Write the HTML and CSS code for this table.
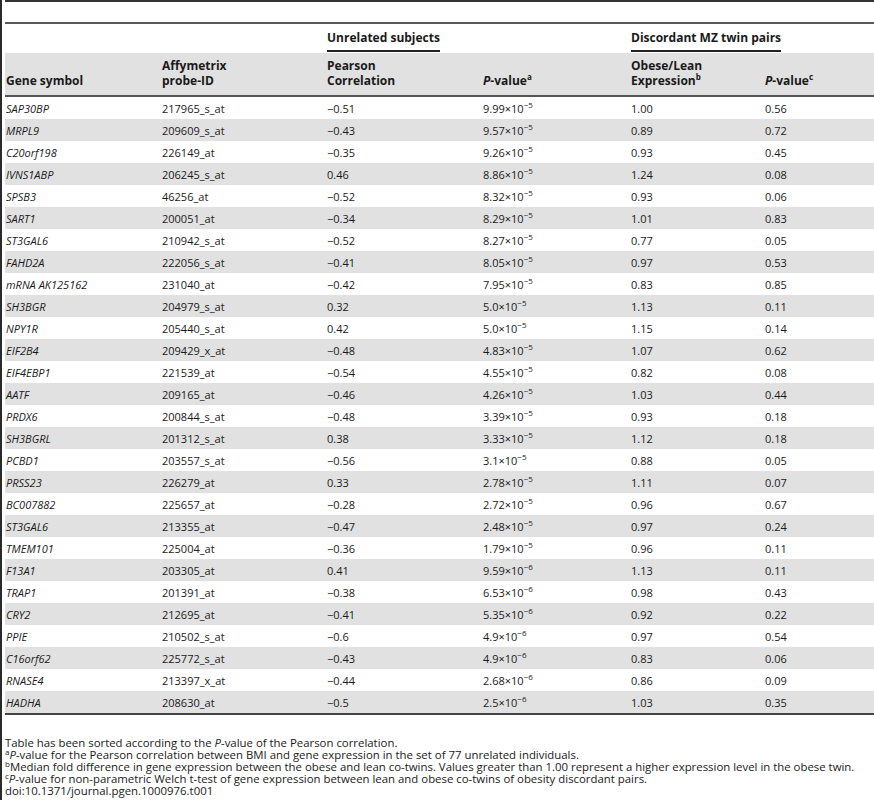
FILE: index.html
```html
<!DOCTYPE html>
<html>
<head>
<meta charset="utf-8">
<link rel="stylesheet" href="styles.css">
</head>
<body>
<div class="frame">
  <div class="topbar"></div>
  <table class="data">
    <colgroup>
      <col class="c1"><col class="c2"><col class="c3"><col class="c4"><col class="c5"><col class="c6">
    </colgroup>
    <thead>
      <tr class="group">
        <th></th><th></th>
        <th colspan="2"><span class="ul">Unrelated subjects</span></th>
        <th colspan="2"><span class="ul">Discordant MZ twin pairs</span></th>
      </tr>
      <tr class="head">
        <th>Gene symbol</th>
        <th>Affymetrix<br>probe-ID</th>
        <th>Pearson<br>Correlation</th>
        <th><i>P</i>-value<sup>a</sup></th>
        <th>Obese/Lean<br>Expression<sup>b</sup></th>
        <th><i>P</i>-value<sup>c</sup></th>
      </tr>
    </thead>
    <tbody>
      <tr><td><i>SAP30BP</i></td><td>217965_s_at</td><td>−0.51</td><td>9.99×10<sup>−5</sup></td><td>1.00</td><td>0.56</td></tr>
      <tr><td><i>MRPL9</i></td><td>209609_s_at</td><td>−0.43</td><td>9.57×10<sup>−5</sup></td><td>0.89</td><td>0.72</td></tr>
      <tr><td><i>C20orf198</i></td><td>226149_at</td><td>−0.35</td><td>9.26×10<sup>−5</sup></td><td>0.93</td><td>0.45</td></tr>
      <tr><td><i>IVNS1ABP</i></td><td>206245_s_at</td><td>0.46</td><td>8.86×10<sup>−5</sup></td><td>1.24</td><td>0.08</td></tr>
      <tr><td><i>SPSB3</i></td><td>46256_at</td><td>−0.52</td><td>8.32×10<sup>−5</sup></td><td>0.93</td><td>0.06</td></tr>
      <tr><td><i>SART1</i></td><td>200051_at</td><td>−0.34</td><td>8.29×10<sup>−5</sup></td><td>1.01</td><td>0.83</td></tr>
      <tr><td><i>ST3GAL6</i></td><td>210942_s_at</td><td>−0.52</td><td>8.27×10<sup>−5</sup></td><td>0.77</td><td>0.05</td></tr>
      <tr><td><i>FAHD2A</i></td><td>222056_s_at</td><td>−0.41</td><td>8.05×10<sup>−5</sup></td><td>0.97</td><td>0.53</td></tr>
      <tr><td><i>mRNA AK125162</i></td><td>231040_at</td><td>−0.42</td><td>7.95×10<sup>−5</sup></td><td>0.83</td><td>0.85</td></tr>
      <tr><td><i>SH3BGR</i></td><td>204979_s_at</td><td>0.32</td><td>5.0×10<sup>−5</sup></td><td>1.13</td><td>0.11</td></tr>
      <tr><td><i>NPY1R</i></td><td>205440_s_at</td><td>0.42</td><td>5.0×10<sup>−5</sup></td><td>1.15</td><td>0.14</td></tr>
      <tr><td><i>EIF2B4</i></td><td>209429_x_at</td><td>−0.48</td><td>4.83×10<sup>−5</sup></td><td>1.07</td><td>0.62</td></tr>
      <tr><td><i>EIF4EBP1</i></td><td>221539_at</td><td>−0.54</td><td>4.55×10<sup>−5</sup></td><td>0.82</td><td>0.08</td></tr>
      <tr><td><i>AATF</i></td><td>209165_at</td><td>−0.46</td><td>4.26×10<sup>−5</sup></td><td>1.03</td><td>0.44</td></tr>
      <tr><td><i>PRDX6</i></td><td>200844_s_at</td><td>−0.48</td><td>3.39×10<sup>−5</sup></td><td>0.93</td><td>0.18</td></tr>
      <tr><td><i>SH3BGRL</i></td><td>201312_s_at</td><td>0.38</td><td>3.33×10<sup>−5</sup></td><td>1.12</td><td>0.18</td></tr>
      <tr><td><i>PCBD1</i></td><td>203557_s_at</td><td>−0.56</td><td>3.1×10<sup>−5</sup></td><td>0.88</td><td>0.05</td></tr>
      <tr><td><i>PRSS23</i></td><td>226279_at</td><td>0.33</td><td>2.78×10<sup>−5</sup></td><td>1.11</td><td>0.07</td></tr>
      <tr><td><i>BC007882</i></td><td>225657_at</td><td>−0.28</td><td>2.72×10<sup>−5</sup></td><td>0.96</td><td>0.67</td></tr>
      <tr><td><i>ST3GAL6</i></td><td>213355_at</td><td>−0.47</td><td>2.48×10<sup>−5</sup></td><td>0.97</td><td>0.24</td></tr>
      <tr><td><i>TMEM101</i></td><td>225004_at</td><td>−0.36</td><td>1.79×10<sup>−5</sup></td><td>0.96</td><td>0.11</td></tr>
      <tr><td><i>F13A1</i></td><td>203305_at</td><td>0.41</td><td>9.59×10<sup>−6</sup></td><td>1.13</td><td>0.11</td></tr>
      <tr><td><i>TRAP1</i></td><td>201391_at</td><td>−0.38</td><td>6.53×10<sup>−6</sup></td><td>0.98</td><td>0.43</td></tr>
      <tr><td><i>CRY2</i></td><td>212695_at</td><td>−0.41</td><td>5.35×10<sup>−6</sup></td><td>0.92</td><td>0.22</td></tr>
      <tr><td><i>PPIE</i></td><td>210502_s_at</td><td>−0.6</td><td>4.9×10<sup>−6</sup></td><td>0.97</td><td>0.54</td></tr>
      <tr><td><i>C16orf62</i></td><td>225772_s_at</td><td>−0.43</td><td>4.9×10<sup>−6</sup></td><td>0.83</td><td>0.06</td></tr>
      <tr><td><i>RNASE4</i></td><td>213397_x_at</td><td>−0.44</td><td>2.68×10<sup>−6</sup></td><td>0.86</td><td>0.09</td></tr>
      <tr><td><i>HADHA</i></td><td>208630_at</td><td>−0.5</td><td>2.5×10<sup>−6</sup></td><td>1.03</td><td>0.35</td></tr>
    </tbody>
  </table>
  <div class="notes">
    <p>Table has been sorted according to the <i>P</i>-value of the Pearson correlation.</p>
    <p><sup>a</sup><i>P</i>-value for the Pearson correlation between BMI and gene expression in the set of 77 unrelated individuals.</p>
    <p><sup>b</sup>Median fold difference in gene expression between the obese and lean co-twins. Values greater than 1.00 represent a higher expression level in the obese twin.</p>
    <p><sup>c</sup><i>P</i>-value for non-parametric Welch t-test of gene expression between lean and obese co-twins of obesity discordant pairs.</p>
    <p>doi:10.1371/journal.pgen.1000976.t001</p>
  </div>
</div>
</body>
</html>
```

FILE: styles.css
```css
html, body {
  margin: 0;
  padding: 0;
  background: #fff;
}
body {
  font-family: "Open Sans", "Liberation Sans", sans-serif;
  color: #1a1a1a;
  overflow: hidden;
}
.frame {
  border-left: 2px solid #2a2a2a;
  padding-left: 3px;
  min-height: 800px;
  box-sizing: border-box;
}
.topbar {
  height: 20px;
  border-top: 2px solid #333;
  border-bottom: 2px solid #5a5a5a;
}
.data {
  width: 869px;
  border-collapse: collapse;
  table-layout: fixed;
  font-size: 11px;
}
.c1 { width: 156px; }
.c2 { width: 165px; }
.c3 { width: 156px; }
.c4 { width: 148px; }
.c5 { width: 134px; }
.c6 { width: 110px; }
.data th, .data td {
  text-align: left;
  padding: 0 0 0 1px;
  white-space: nowrap;
}
.group th {
  height: 29px;
  font-size: 12px;
  font-weight: bold;
  line-height: 15px;
  vertical-align: bottom;
  padding-bottom: 0;
}
.ul {
  display: inline-block;
  vertical-align: bottom;
  border-bottom: 2px solid #222;
  line-height: 15px;
  padding-bottom: 5px;
  margin-bottom: 1px;
}
.head th {
  background: #e1e1e1;
  font-size: 12px;
  font-weight: bold;
  line-height: 15px;
  vertical-align: bottom;
  padding-top: 5px;
  padding-bottom: 7px;
  border-bottom: 2px solid #555;
}
.head sup, .data td sup {
  font-size: 8px;
  line-height: 0;
  vertical-align: 5px;
}
.data td {
  height: 22px;
  vertical-align: middle;
}
.data tbody tr:nth-child(even) td {
  background: #e1e1e1;
}
.data tbody tr:last-child td {
  border-bottom: 2px solid #444;
}
.notes {
  padding-top: 22px;
  font-size: 11.4px;
  line-height: 12px;
}
.notes p {
  margin: 0;
}
.notes sup {
  font-size: 8px;
  line-height: 0;
  vertical-align: 4px;
}
```
